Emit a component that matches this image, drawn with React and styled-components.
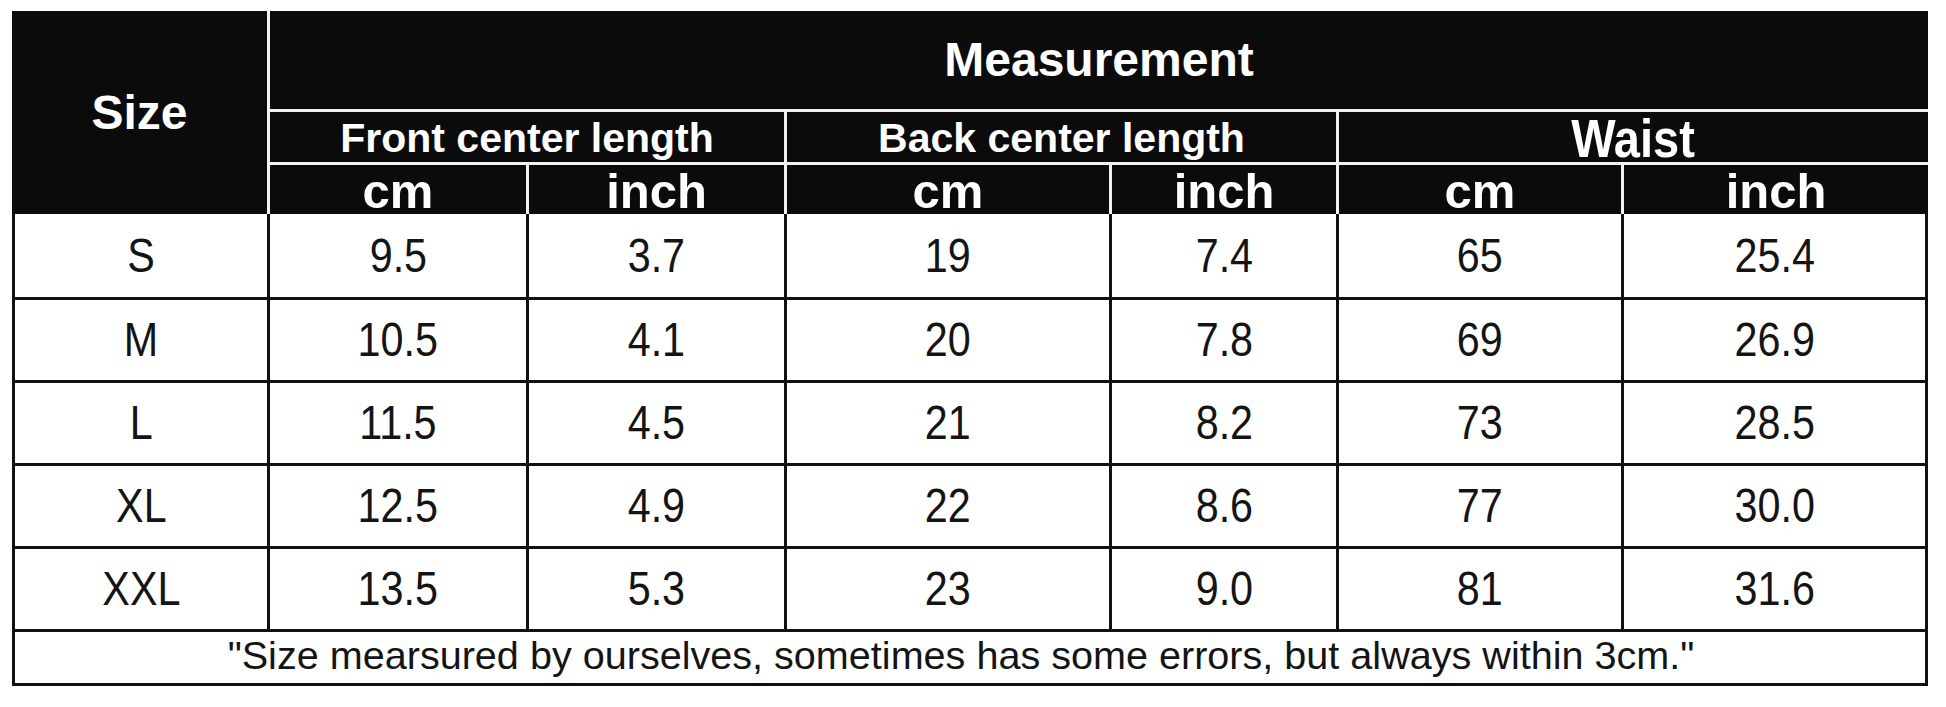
import React from 'react';
import styled, { createGlobalStyle } from 'styled-components';

const GlobalStyle = createGlobalStyle`
  html, body {
    margin: 0;
    padding: 0;
    background: #ffffff;
  }
  body {
    font-family: "Liberation Sans", Arial, Helvetica, sans-serif;
  }
`;

const columns = '255px 256px 255px 322px 224px 282px 304px';

const rows = [
  { size: 'S', values: ['9.5', '3.7', '19', '7.4', '65', '25.4'] },
  { size: 'M', values: ['10.5', '4.1', '20', '7.8', '69', '26.9'] },
  { size: 'L', values: ['11.5', '4.5', '21', '8.2', '73', '28.5'] },
  { size: 'XL', values: ['12.5', '4.9', '22', '8.6', '77', '30.0'] },
  { size: 'XXL', values: ['13.5', '5.3', '23', '9.0', '81', '31.6'] },
];

const groups = [
  { title: 'Front center length', col: '2 / 4', size: 41 },
  { title: 'Back center length', col: '4 / 6', size: 41 },
  { title: 'Waist', col: '6 / 8', size: 54, squeeze: 0.87 },
];

const Page = styled.div`
  padding: 11px 0 0 12px;
`;

const Chart = styled.div`
  width: 1916px;
`;

const Head = styled.div`
  display: grid;
  grid-template-columns: ${columns};
  grid-template-rows: 98px 50px 49px;
  gap: 3px;
  background: #f2f2f2;
`;

const HeadCell = styled.div`
  grid-column: ${(p) => p.$col};
  grid-row: ${(p) => p.$row};
  display: flex;
  align-items: center;
  justify-content: center;
  background: #0b0b0b;
  color: #ffffff;
  font-weight: 700;
  font-size: ${(p) => p.$size}px;
  line-height: 1;
  white-space: nowrap;
  padding-top: ${(p) => p.$nudge || 0}px;
`;

const Body = styled.div`
  display: grid;
  grid-template-columns: 252px 256px 255px 322px 224px 282px 301px;
  grid-template-rows: 83px repeat(4, 80px) 51px;
  gap: 3px;
  padding: 0 3px 3px;
  background: #111111;
`;

const Cell = styled.div`
  display: flex;
  align-items: center;
  justify-content: center;
  background: #ffffff;
  color: #141414;
  font-size: 48px;
  line-height: 1;
  white-space: nowrap;
`;

// footer line spans the full width, text sits a touch left of centre
const Note = styled(Cell)`
  grid-column: 1 / -1;
  font-size: 39.6px;
  padding: 0 18px 4px 0;
`;

const Text = styled.span`
  display: inline-block;
  transform: scaleX(${(p) => p.$squeeze || 1});
`;

export default function App() {
  return (
    <>
      <GlobalStyle />
      <Page>
        <Chart>
          <Head>
            <HeadCell $col="1" $row="1 / 4" $size={48}>Size</HeadCell>
            <HeadCell $col="2 / 8" $row="1" $size={48}>Measurement</HeadCell>
            {groups.map((g) => (
              <HeadCell key={g.title} $col={g.col} $row="2" $size={g.size} $nudge={2}>
                <Text $squeeze={g.squeeze}>{g.title}</Text>
              </HeadCell>
            ))}
            {['cm', 'inch', 'cm', 'inch', 'cm', 'inch'].map((unit, i) => (
              <HeadCell key={i} $col={`${i + 2}`} $row="3" $size={49} $nudge={4}>
                {unit}
              </HeadCell>
            ))}
          </Head>
          <Body>
            {rows.map((r) => (
              <React.Fragment key={r.size}>
                <Cell>
                  <Text $squeeze={0.86}>{r.size}</Text>
                </Cell>
                {r.values.map((v, i) => (
                  <Cell key={i}>
                    <Text $squeeze={0.86}>{v}</Text>
                  </Cell>
                ))}
              </React.Fragment>
            ))}
            <Note>
              "Size mearsured by ourselves, sometimes has some errors, but always within 3cm."
            </Note>
          </Body>
        </Chart>
      </Page>
    </>
  );
}
